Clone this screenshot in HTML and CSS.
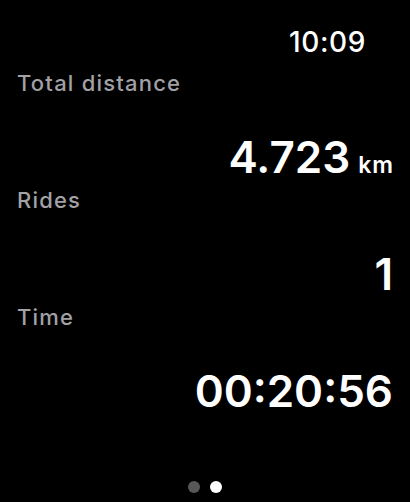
FILE: index.html
```html
<!DOCTYPE html>
<html lang="en">
<head>
  <meta charset="UTF-8">
  <meta name="viewport" content="width=device-width, initial-scale=1.0">
  <title>Summary</title>
  <link rel="stylesheet" href="styles.css">
</head>
<body>
  <div class="status-bar">
    <span class="clock">10:09</span>
  </div>

  <div class="stats">
    <div class="stat">
      <div class="stat-label">Total distance</div>
      <div class="stat-value">4.723<span class="unit">km</span></div>
    </div>
    <div class="stat">
      <div class="stat-label">Rides</div>
      <div class="stat-value">1</div>
    </div>
    <div class="stat">
      <div class="stat-label">Time</div>
      <div class="stat-value">00:20:56</div>
    </div>
  </div>

  <div class="pager">
    <span class="dot"></span>
    <span class="dot active"></span>
  </div>
</body>
</html>
```

FILE: styles.css
```css
body {
  font-family: Inter, "Noto Sans", sans-serif;
  background-color: #000;
  color: #fff;
  margin: 0;
  padding: 0 17px;
  height: 502px;
  overflow: hidden;
}
.status-bar {
  display: flex;
  justify-content: flex-end;
  padding: 28px 27px 0 0;
}
.clock {
  font-size: 28px;
  line-height: 28px;
  font-weight: 500;
  letter-spacing: 0.6px;
}
.stats {
  margin-top: 16px;
}
.stat {
  margin-bottom: 10px;
}
.stat-label {
  font-size: 22px;
  line-height: 22px;
  font-weight: 500;
  color: #a1a1a6;
  letter-spacing: 1.2px;
  margin-bottom: 41px;
}
.stat-value {
  font-size: 44px;
  line-height: 44px;
  font-weight: 600;
  text-align: right;
}
.unit {
  font-size: 23px;
  line-height: 1;
  font-weight: 600;
  margin-left: 8px;
  margin-right: -1px;
  letter-spacing: 1px;
}
.pager {
  display: flex;
  justify-content: center;
  gap: 10px;
  margin-top: 68px;
}
.dot {
  width: 12px;
  height: 12px;
  border-radius: 50%;
  background-color: #575757;
}
.dot.active {
  background-color: #fff;
}
```
